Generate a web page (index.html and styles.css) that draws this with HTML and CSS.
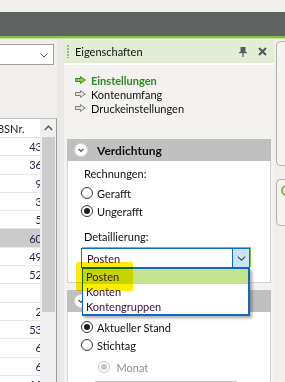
FILE: index.html
```html
<!DOCTYPE html>
<html lang="de">
<head>
<meta charset="utf-8">
<title>Eigenschaften</title>
<link rel="stylesheet" href="styles.css">
</head>
<body>
<div class="screen">
  <div class="topstrip"></div>
  <div class="titlebar"></div>
  <div class="accent"></div>
  <div class="main">
    <aside class="left">
      <div class="left-top">
        <div class="lcombo">
          <svg class="lchev" width="8" height="5" viewBox="0 0 8 5"><path d="M0.5 0.5 L4 4 L7.5 0.5" fill="none" stroke="#555" stroke-width="1"/></svg>
        </div>
      </div>
      <div class="grid">
        <div class="cells">
          <div class="ghead"><span>BSNr.</span></div>
          <div class="row"><span>43</span></div>
          <div class="row"><span>36</span></div>
          <div class="row"><span>9</span></div>
          <div class="row"><span>3</span></div>
          <div class="row"><span>5</span></div>
          <div class="row sel"><span>60</span></div>
          <div class="row"><span>49</span></div>
          <div class="row"><span>52</span></div>
          <div class="row"><span></span></div>
          <div class="row"><span>2</span></div>
          <div class="row"><span>53</span></div>
          <div class="row"><span>6</span></div>
          <div class="row"><span>6</span></div>
          <div class="row"><span>11</span></div>
        </div>
        <div class="vscroll">
          <div class="sbtn"><svg width="9" height="6" viewBox="0 0 9 6"><path d="M0.8 5 L4.5 1.2 L8.2 5" fill="none" stroke="#606060" stroke-width="1.5"/></svg></div>
          <div class="thumb"></div>
        </div>
      </div>
    </aside>
    <div class="splitter"></div>
    <section class="props">
      <header class="props-head">
        <span class="grip"></span>
        <span class="ptitle">Eigenschaften</span>
        <svg class="pin" width="9" height="10" viewBox="0 0 9 10"><rect x="1.5" y="0" width="5" height="5" fill="#5b5b5b"/><rect x="0" y="5" width="8" height="1.2" fill="#5b5b5b"/><rect x="3.4" y="6" width="1.2" height="4" fill="#5b5b5b"/></svg>
        <svg class="close" width="9" height="9" viewBox="0 0 9 9"><path d="M1 1 L8 8 M8 1 L1 8" stroke="#555" stroke-width="2"/></svg>
      </header>
      <nav class="links">
        <div class="link active"><svg width="11" height="8" viewBox="0 0 11 8"><path d="M0.5 2.5 H5.5 V0.6 L10.2 4 L5.5 7.4 V5.5 H0.5 Z" fill="#8ccf4a" stroke="#3a8c1e" stroke-width="1"/></svg><span>Einstellungen</span></div>
        <div class="link"><svg width="11" height="8" viewBox="0 0 11 8"><path d="M0.5 2.5 H5.5 V0.6 L10.2 4 L5.5 7.4 V5.5 H0.5 Z" fill="#e2e2e2" stroke="#7d7d7d" stroke-width="1"/></svg><span>Kontenumfang</span></div>
        <div class="link"><svg width="11" height="8" viewBox="0 0 11 8"><path d="M0.5 2.5 H5.5 V0.6 L10.2 4 L5.5 7.4 V5.5 H0.5 Z" fill="#e2e2e2" stroke="#7d7d7d" stroke-width="1"/></svg><span>Druckeinstellungen</span></div>
      </nav>
      <div class="group">
        <div class="ghdr">
          <svg class="toggle" width="14" height="14" viewBox="0 0 14 14"><circle cx="7" cy="7" r="6.5" fill="#fff" stroke="#d6d6d6"/><path d="M4.6 6 L7 8.4 L9.4 6" fill="none" stroke="#555" stroke-width="1.3"/></svg>
          <span class="gtitle">Verdichtung</span>
        </div>
        <div class="gbody g1">
          <div class="lbl">Rechnungen:</div>
          <div class="radio first"><span class="rb"></span><span>Gerafft</span></div>
          <div class="radio"><span class="rb on"></span><span>Ungerafft</span></div>
          <div class="lbl det">Detaillierung:</div>
          <div class="combo-wrap">
            <div class="combo">
              <span class="ctext">Posten</span>
              <span class="cbtn"><svg width="9" height="5" viewBox="0 0 9 5"><path d="M0.8 0.6 L4.5 4.2 L8.2 0.6" fill="none" stroke="#444" stroke-width="1.1"/></svg></span>
            </div>
            <ul class="droplist">
              <li class="sel">Posten</li>
              <li>Konten</li>
              <li>Kontengruppen</li>
            </ul>
            <div class="marker"></div>
          </div>
        </div>
      </div>
      <div class="group g2wrap">
        <div class="ghdr">
          <svg class="toggle" width="14" height="14" viewBox="0 0 14 14"><circle cx="7" cy="7" r="6.5" fill="#fff" stroke="#d6d6d6"/><path d="M4.6 6 L7 8.4 L9.4 6" fill="none" stroke="#555" stroke-width="1.3"/></svg>
        </div>
        <div class="gbody g2">
          <div class="radio"><span class="rb on"></span><span>Aktueller Stand</span></div>
          <div class="radio"><span class="rb"></span><span>Stichtag</span></div>
          <div class="radio sub"><span class="rb dis on"></span><span class="distext">Monat</span></div>
          <div class="subline"></div>
        </div>
      </div>
    </section>
    <div class="sidetabs">
      <div class="tab t1"></div>
      <div class="tab t2"><span class="ring"></span></div>
    </div>
  </div>
</div>
</body>
</html>
```
FILE: styles.css
```css
html, body {
  margin: 0;
  padding: 0;
  background: #f0efeb;
}
.screen {
  width: 285px;
  height: 382px;
  overflow: hidden;
  display: flex;
  flex-direction: column;
  background: #f0efeb;
  font-family: Lato, "Liberation Sans", sans-serif;
  font-size: 11px;
  color: #111;
}
.topstrip { height: 12px; background: #f1f0ec; flex: none; }
.titlebar { height: 24px; background: #5f6362; flex: none; }
.accent {
  height: 2px;
  background: #84c23d;
  border-bottom: 1px solid #c3e29f;
  flex: none;
}
.main {
  flex: 1;
  display: flex;
  min-height: 0;
}

/* left panel */
.left {
  width: 57px;
  flex: none;
  display: flex;
  flex-direction: column;
}
.left-top {
  height: 79px;
  flex: none;
}
.lcombo {
  margin-top: 5px;
  margin-left: -3px;
  width: 57px;
  height: 21px;
  box-sizing: border-box;
  background: #fff;
  border: 1px solid #a0a0a0;
  display: flex;
  align-items: center;
  justify-content: flex-end;
}
.lchev { margin-right: 5px; margin-top: 1px; }
.grid {
  flex: 1;
  display: flex;
  border-top: 1px solid #c6c6c6;
  border-right: 1px solid #9c9c9c;
  background: #fff;
}
.cells {
  width: 40px;
  overflow: hidden;
  flex: none;
}
.ghead {
  height: 19px;
  box-sizing: border-box;
  border-bottom: 1px solid #e2e2e2;
  display: flex;
  align-items: center;
  white-space: nowrap;
  color: #222;
}
.ghead span { margin-left: -3px; }
.row {
  height: 18.3px;
  box-sizing: border-box;
  border-bottom: 1px solid #e6e6e6;
  display: flex;
  align-items: center;
  justify-content: flex-end;
  color: #1c2040;
  white-space: nowrap;
}
.row span { margin-right: -2px; }
.row.sel { background: #cbcbcb; }
.vscroll {
  width: 16px;
  flex: none;
  background: #f0f0f0;
  display: flex;
  flex-direction: column;
}
.sbtn {
  height: 18px;
  display: flex;
  align-items: center;
  justify-content: center;
  padding-left: 1px;
}
.thumb {
  height: 175px;
  margin: 0 1px 0 2px;
  background: #cdcdcd;
}

.splitter {
  width: 7px;
  flex: none;
  background: #e8e7e3;
}

/* properties panel */
.props {
  width: 210px;
  flex: none;
  padding-top: 1px;
  background: #f3f2ee;
  display: flex;
  flex-direction: column;
}
.props-head {
  height: 23px;
  flex: none;
  background: #e1eed4;
  border-bottom: 2px solid #fff;
  display: flex;
  align-items: center;
}
.grip {
  width: 2px;
  height: 13px;
  margin-left: 3px;
  background: repeating-linear-gradient(to bottom, #a9a9a9 0 2px, transparent 2px 3px);
}
.ptitle { margin-left: 6px; color: #111; }
.pin { margin-left: auto; margin-top: 1px; }
.close { margin-left: 10px; margin-right: 7px; }

.links {
  padding: 8px 0 0 11px;
  flex: none;
}
.link {
  height: 14px;
  display: flex;
  align-items: center;
  gap: 5px;
  white-space: nowrap;
}
.link svg { flex: none; }
.link.active span { color: #2e8a25; font-weight: bold; }

.group {
  margin: 24px 3px 0 3px;
  flex: none;
}
.g2wrap { margin-top: 7px; }
.ghdr {
  height: 22px;
  background: #c0c0c0;
  display: flex;
  align-items: center;
  padding-left: 7px;
}
.gtitle { margin-left: 9px; font-weight: bold; font-size: 12px; color: #111; }
.gbody {
  background: #fff;
  border: 1px solid #d2d2d2;
  border-top: none;
  box-sizing: border-box;
  padding-left: 16px;
}
.g1 { height: 122px; padding-top: 3px; }
.g2 { height: 80px; padding-top: 6px; }
.lbl {
  height: 18px;
  display: flex;
  align-items: center;
}
.lbl.det { margin-top: 7px; }
.radio {
  height: 18px;
  margin-left: -3px;
  display: flex;
  align-items: center;
  gap: 4px;
  white-space: nowrap;
}
.radio.first { margin-top: 2px; }
.radio.sub { margin-top: 4px; padding-left: 16.5px; gap: 7px; }
.rb {
  width: 12px;
  height: 12px;
  box-sizing: border-box;
  border: 1px solid #333;
  border-radius: 50%;
  background: #fff;
  display: flex;
  align-items: center;
  justify-content: center;
  flex: none;
}
.rb.on::after {
  content: "";
  width: 6px;
  height: 6px;
  border-radius: 50%;
  background: #1c1c1c;
}
.rb.dis { border-color: #c9c9c9; }
.rb.dis::after { background: #c9c9c9; }
.distext { color: #8d8d8d; }
.subline {
  margin: 5px 0 0 11px;
  width: 142px;
  height: 1px;
  background: #c6c6c6;
}

.combo-wrap {
  position: relative;
  margin-top: 3px;
  margin-left: -3px;
  width: 169px;
  height: 20px;
}
.combo {
  height: 20px;
  box-sizing: border-box;
  border: 1px solid #0a6ed1;
  box-shadow: 1px -1px 0 #7cc142;
  background: #fff;
  display: flex;
  align-items: center;
}
.ctext { padding-left: 5px; color: #3a0c3a; flex: 1; }
.cbtn {
  width: 16px;
  align-self: stretch;
  background: #cce4f7;
  border-left: 1px solid #0a6ed1;
  display: flex;
  align-items: center;
  justify-content: center;
}
.droplist {
  position: absolute;
  z-index: 5;
  top: 20px;
  left: 1px;
  width: 168px;
  margin: 0;
  padding: 0;
  list-style: none;
  box-sizing: border-box;
  background: #fff;
  border: 1px solid #1266c4;
  border-width: 1px 2px 2px 1px;
  box-shadow: 2px 2px 3px rgba(0, 0, 0, 0.35);
}
.droplist li {
  height: 15px;
  line-height: 15px;
  padding-left: 3px;
  color: #3a0c3a;
}
.droplist li.sel { background: #c4e58e; }
.marker {
  position: absolute;
  z-index: 6;
  left: -5px;
  top: 14px;
  width: 57px;
  height: 29px;
  background: #ffee00;
  mix-blend-mode: multiply;
  border-radius: 2px;
  filter: blur(0.7px);
}

/* collapsed side tabs */
.sidetabs {
  flex: none;
  width: 11px;
  padding-left: 2px;
  box-sizing: border-box;
  display: flex;
  flex-direction: column;
  overflow: hidden;
}
.tab {
  width: 20px;
  flex: none;
  box-sizing: border-box;
  border: 1px solid #b3b3b3;
  border-right: none;
  border-radius: 5px 0 0 5px;
  background: #f5f4f1;
  position: relative;
}
.t1 { margin-top: 2px; height: 125px; }
.t2 { margin-top: 13px; height: 47px; }
.ring {
  position: absolute;
  left: 4px;
  top: 5px;
  width: 11px;
  height: 11px;
  box-sizing: border-box;
  border: 2px solid #79bf3d;
  border-radius: 50%;
}
```
